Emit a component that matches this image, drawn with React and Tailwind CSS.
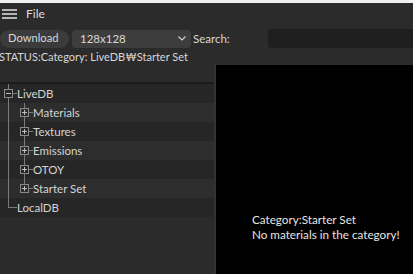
import React from 'react';

const font = { fontFamily: 'Lato, "Noto Sans CJK KR", sans-serif' };

const children = ['Materials', 'Textures', 'Emissions', 'OTOY', 'Starter Set'];

function Box({ x, minus }) {
  return (
    <g>
      <rect x={x + 0.5} y={5.5} width={8} height={8} fill="none" stroke="#8a8a8a" />
      <line x1={x + 2} y1={9.5} x2={x + 7} y2={9.5} stroke="#bdbdbd" />
      {!minus && <line x1={x + 4.5} y1={7} x2={x + 4.5} y2={12} stroke="#bdbdbd" />}
    </g>
  );
}

function TreeRow({ depth, label, last, kind, dark }) {
  // kind: 'root' | 'child' | 'leaf'
  const w = depth === 0 ? 17 : 33;
  return (
    <div className={`flex items-center h-[19px] ${dark ? 'bg-[#262626]' : 'bg-[#2d2d2d]'}`}>
      <svg width={w} height={19} className="shrink-0">
        {kind === 'root' && (
          <g>
            <line x1={8.5} y1={0} x2={8.5} y2={5} stroke="#7a7a7a" />
            <line x1={8.5} y1={14} x2={8.5} y2={19} stroke="#7a7a7a" />
            <line x1={13} y1={9.5} x2={17} y2={9.5} stroke="#7a7a7a" />
            <Box x={4} minus />
          </g>
        )}
        {kind === 'leaf' && (
          <g>
            <line x1={8.5} y1={0} x2={8.5} y2={10} stroke="#7a7a7a" />
            <line x1={8.5} y1={9.5} x2={17} y2={9.5} stroke="#7a7a7a" />
          </g>
        )}
        {kind === 'child' && (
          <g>
            <line x1={8.5} y1={0} x2={8.5} y2={19} stroke="#7a7a7a" />
            <line x1={24.5} y1={0} x2={24.5} y2={5} stroke="#7a7a7a" />
            {!last && <line x1={24.5} y1={14} x2={24.5} y2={19} stroke="#7a7a7a" />}
            <line x1={29} y1={9.5} x2={33} y2={9.5} stroke="#7a7a7a" />
            <Box x={20} />
          </g>
        )}
      </svg>
      <span className="text-[11.5px] leading-none text-[#d4d4d4] whitespace-nowrap">{label}</span>
    </div>
  );
}

export default function App() {
  return (
    <div style={font} className="w-[413px] h-[274px] bg-[#2b2b2b] overflow-hidden flex flex-col">
      <div className="h-[3px] bg-[#f0f0f0] shrink-0" />

      {/* Menu bar */}
      <div className="h-[21px] flex items-center shrink-0">
        <svg width={15} height={12} className="ml-[2px]">
          <rect x={0} y={1} width={15} height={2} fill="#b5b5b5" />
          <rect x={0} y={5} width={15} height={2} fill="#b5b5b5" />
          <rect x={0} y={9} width={15} height={2} fill="#b5b5b5" />
        </svg>
        <span className="ml-[9px] text-[12px] text-[#dcdcdc] pt-[1px]">File</span>
      </div>

      {/* Toolbar */}
      <div className="mt-[5px] h-[19px] flex items-center shrink-0">
        <div className="w-[69px] h-[18px] rounded-full bg-[#3b3b3b] flex items-center pl-[8px] text-[11.2px] text-[#d8d8d8]">
          Download
        </div>
        <div className="ml-[3px] w-[119px] h-[18px] rounded-[4px] bg-[#3d3d3d] flex items-center pl-[8px] pr-[5px] text-[11.5px] text-[#d8d8d8]">
          <span className="flex-1">128x128</span>
          <svg width={8} height={5} viewBox="0 0 8 5">
            <path d="M0.5 0.5 L4 4 L7.5 0.5" fill="none" stroke="#cfcfcf" strokeWidth={1.2} />
          </svg>
        </div>
        <span className="ml-[2px] text-[11.5px] text-[#d8d8d8]">Search:</span>
        <div className="ml-auto w-[145px] h-[19px] rounded-l-[4px] bg-[#1f1f1f]" />
      </div>

      {/* Status */}
      <div className="h-[17px] flex items-center shrink-0 -ml-[1px] pt-[2px]">
        <span className="text-[11px] text-[#d8d8d8] whitespace-nowrap">STATUS:Category: LiveDB₩Starter Set</span>
      </div>

      {/* Content */}
      <div className="flex flex-1 min-h-0">
        <div className="w-[214px] flex flex-col">
          <div className="h-[17px]" />
          <div className="h-[2px] bg-[#1c1c1c]" />
          <TreeRow depth={0} label="LiveDB" kind="root" dark />
          {children.map((c, i) => (
            <TreeRow key={c} depth={1} label={c} kind="child" last={i === children.length - 1} dark={i % 2 === 1} />
          ))}
          <TreeRow depth={0} label="LocalDB" kind="leaf" dark />
        </div>
        <div className="w-[2px] bg-[#333333]" />
        <div className="flex-1 bg-black pt-[147px] pl-[36px] text-[11.7px] leading-[15px] text-[#e8e4e4] whitespace-nowrap">
          <div>Category:Starter Set</div>
          <div>No materials in the category!</div>
        </div>
      </div>
    </div>
  );
}
